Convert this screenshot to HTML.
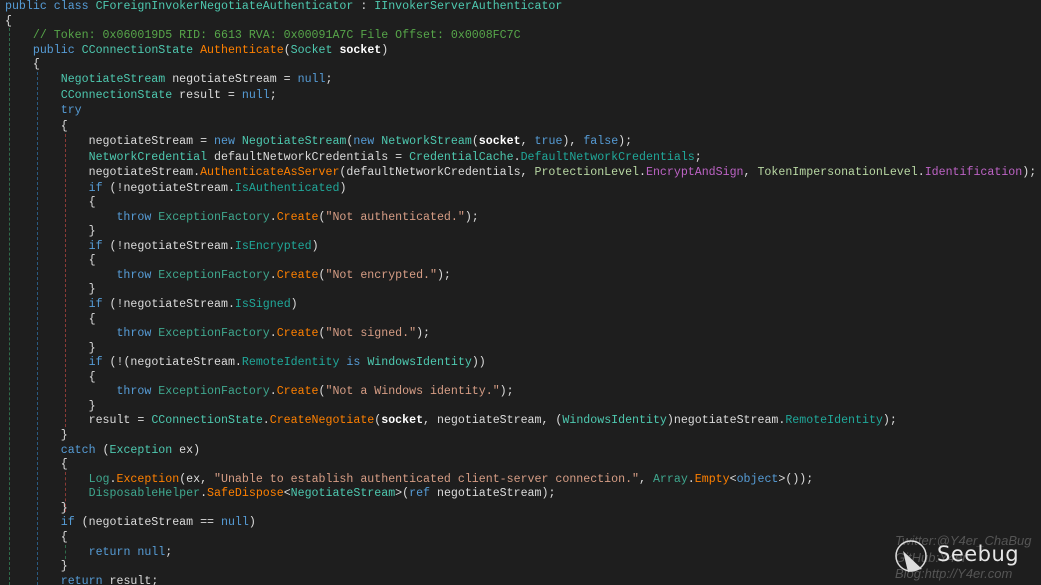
<!DOCTYPE html>
<html><head><meta charset="utf-8"><style>
html,body{margin:0;padding:0;background:#1e1e1e;width:1041px;height:585px;overflow:hidden;position:relative}
pre{margin:0;position:absolute;left:5px;font-family:"Liberation Mono",monospace;font-size:11.62px;color:#dcdcdc;white-space:pre}
.k{color:#569cd6}.t{color:#4ec9b0}.t2{color:#3fa88f}.m{color:#ff8000}.s{color:#d69d85}.p{color:#20a89a}.c{color:#57a64a}.e{color:#b8d7a3}.v{color:#bd63c5}.b{font-weight:bold;color:#fff}
.g{position:absolute;width:0;border-left:1px dashed}
.wm{position:absolute;font-family:"Liberation Sans",sans-serif;font-style:italic;color:#555;font-size:13px}
</style></head><body>
<div class="g" style="left:9px;top:28px;height:557px;border-color:#2e6b4a"></div>
<div class="g" style="left:37px;top:72px;height:513px;border-color:#2a5a80"></div>
<div class="g" style="left:65px;top:134px;height:293px;border-color:#8a3a35"></div>
<div class="g" style="left:65px;top:472px;height:40px;border-color:#8a3a35"></div>
<div class="g" style="left:65px;top:545px;height:14px;border-color:#2e6b4a"></div>
<pre style="top:0;line-height:14.6px"><span class="k">public class</span> <span class="t">CForeignInvokerNegotiateAuthenticator</span> : <span class="t">IInvokerServerAuthenticator</span>
{
    <span class="c">// Token: 0x060019D5 RID: 6613 RVA: 0x00091A7C File Offset: 0x0008FC7C</span>
    <span class="k">public</span> <span class="t">CConnectionState</span> <span class="m">Authenticate</span>(<span class="t">Socket</span> <span class="b">socket</span>)
    {</pre>
<pre style="top:72px;line-height:15.5px">        <span class="t">NegotiateStream</span> negotiateStream = <span class="k">null</span>;
        <span class="t">CConnectionState</span> result = <span class="k">null</span>;
        <span class="k">try</span>
        {
            negotiateStream = <span class="k">new</span> <span class="t">NegotiateStream</span>(<span class="k">new</span> <span class="t">NetworkStream</span>(<span class="b">socket</span>, <span class="k">true</span>), <span class="k">false</span>);
            <span class="t">NetworkCredential</span> defaultNetworkCredentials = <span class="t">CredentialCache</span>.<span class="p">DefaultNetworkCredentials</span>;
            negotiateStream.<span class="m">AuthenticateAsServer</span>(defaultNetworkCredentials, <span class="e">ProtectionLevel</span>.<span class="v">EncryptAndSign</span>, <span class="e">TokenImpersonationLevel</span>.<span class="v">Identification</span>);
            <span class="k">if</span> (!negotiateStream.<span class="p">IsAuthenticated</span>)</pre>
<pre style="top:196px;line-height:14.56px">            {
                <span class="k">throw</span> <span class="t2">ExceptionFactory</span>.<span class="m">Create</span>(<span class="s">"Not authenticated."</span>);
            }
            <span class="k">if</span> (!negotiateStream.<span class="p">IsEncrypted</span>)
            {
                <span class="k">throw</span> <span class="t2">ExceptionFactory</span>.<span class="m">Create</span>(<span class="s">"Not encrypted."</span>);
            }
            <span class="k">if</span> (!negotiateStream.<span class="p">IsSigned</span>)
            {
                <span class="k">throw</span> <span class="t2">ExceptionFactory</span>.<span class="m">Create</span>(<span class="s">"Not signed."</span>);
            }
            <span class="k">if</span> (!(negotiateStream.<span class="p">RemoteIdentity</span> <span class="k">is</span> <span class="t">WindowsIdentity</span>))
            {
                <span class="k">throw</span> <span class="t2">ExceptionFactory</span>.<span class="m">Create</span>(<span class="s">"Not a Windows identity."</span>);
            }
            result = <span class="t">CConnectionState</span>.<span class="m">CreateNegotiate</span>(<span class="b">socket</span>, negotiateStream, (<span class="t">WindowsIdentity</span>)negotiateStream.<span class="p">RemoteIdentity</span>);
        }
        <span class="k">catch</span> (<span class="t">Exception</span> ex)
        {
            <span class="t2">Log</span>.<span class="m">Exception</span>(ex, <span class="s">"Unable to establish authenticated client-server connection."</span>, <span class="t2">Array</span>.<span class="m">Empty</span>&lt;<span class="k">object</span>&gt;());
            <span class="t2">DisposableHelper</span>.<span class="m">SafeDispose</span>&lt;<span class="t">NegotiateStream</span>&gt;(<span class="k">ref</span> negotiateStream);
        }
        <span class="k">if</span> (negotiateStream == <span class="k">null</span>)
        {
            <span class="k">return null</span>;
        }
        <span class="k">return</span> result;
</pre>
<div class="wm" style="left:895px;top:533px">Twitter:@Y4er_ChaBug</div>
<div class="wm" style="left:895px;top:550px">GitHub:Y4er</div>
<div class="wm" style="left:895px;top:566px">Blog:http://Y4er.com</div>
<svg style="position:absolute;left:893px;top:538px" width="40" height="40" viewBox="0 0 40 40"><circle cx="18" cy="18" r="15" fill="none" stroke="#ddd" stroke-width="1.5"/><path d="M10 13 L29 31 L15 34 Z" fill="#ddd"/></svg>
<div style="position:absolute;left:937px;top:542px;font-family:'DejaVu Sans',sans-serif;font-size:21px;color:#e6e6e6;letter-spacing:0.5px">Seebug</div>
</body></html>
